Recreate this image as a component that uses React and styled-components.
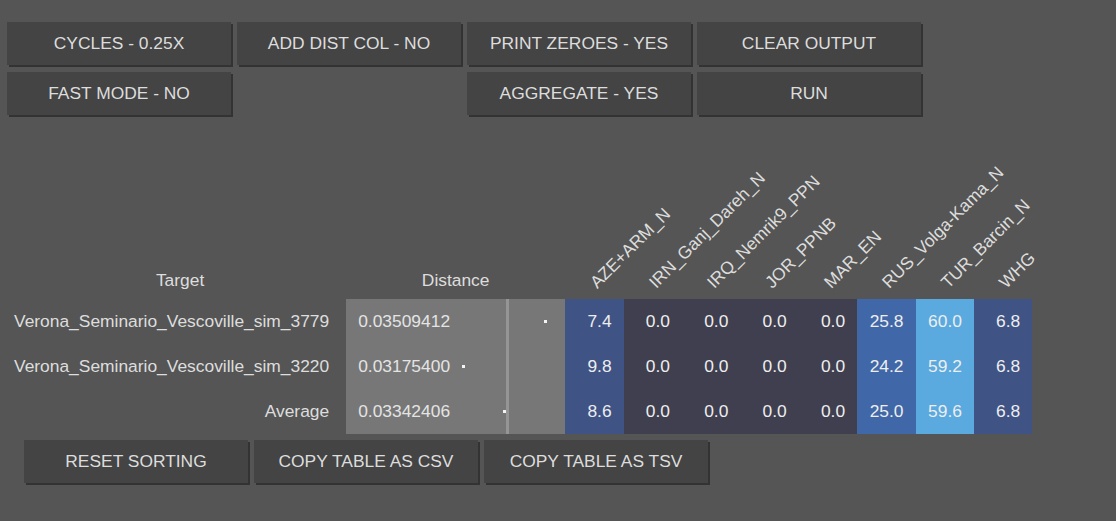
import styled, { createGlobalStyle } from "styled-components";

const GlobalStyle = createGlobalStyle`
  body {
    margin: 0;
    background: #555555;
    color: #dddddd;
    font-family: "Liberation Sans", Arial, sans-serif;
  }
`;

const populations = [
  "AZE+ARM_N",
  "IRN_Ganj_Dareh_N",
  "IRQ_Nemrik9_PPN",
  "JOR_PPNB",
  "MAR_EN",
  "RUS_Volga-Kama_N",
  "TUR_Barcin_N",
  "WHG",
];

const rows = [
  { name: "Verona_Seminario_Vescoville_sim_3779", dist: 0.03509412, values: [7.4, 0, 0, 0, 0, 25.8, 60.0, 6.8] },
  { name: "Verona_Seminario_Vescoville_sim_3220", dist: 0.031754, values: [9.8, 0, 0, 0, 0, 24.2, 59.2, 6.8] },
  { name: "Average", dist: 0.03342406, values: [8.6, 0, 0, 0, 0, 25.0, 59.6, 6.8] },
];

// place of the dot in the distance column
const dotLeft = (d) => 116 + (d - 0.031754) * 24551;

const heat = (v) => {
  if (v === 0) return "#3f3f4f";
  if (v < 15) return "#3f5385";
  if (v < 40) return "#4067a7";
  return "#5aa9df";
};

const Page = styled.div`
  padding: 22px 0 0 7px;
  min-height: 521px;
  box-sizing: border-box;
`;

const Controls = styled.div`
  display: grid;
  grid-template-columns: repeat(4, 224px);
  grid-auto-rows: 43px;
  column-gap: 6px;
  row-gap: 7px;
`;

const Button = styled.button`
  grid-column: ${(p) => p.$col || "auto"};
  width: 224px;
  height: 43px;
  padding: 0;
  background: #444444;
  color: #dddddd;
  border: none;
  box-shadow: 2px 2px 0 #333333;
  font-family: "Liberation Sans", Arial, sans-serif;
  font-size: 17.4px;
  cursor: pointer;
`;

const Table = styled.table`
  margin: 43px 0 0 7px;
  border-collapse: collapse;
  border-spacing: 0;
  table-layout: fixed;
  font-size: 17.4px;
`;

const Head = styled.th`
  height: 132px;
  padding: 0 0 9px;
  width: ${(p) => p.$w}px;
  font-weight: normal;
  text-align: center;
  vertical-align: bottom;
  line-height: 20px;
`;

const PopHead = styled.th`
  width: 58.4px;
  padding: 0;
  vertical-align: bottom;
  font-weight: normal;
`;

const Slanted = styled.div`
  width: 0;
  height: 20px;
  line-height: 20px;
  white-space: nowrap;
  text-align: left;
  transform-origin: 0 100%;
  transform: translate(35px, -7px) rotate(-45deg);
`;

const Row = styled.tr`
  height: 45px;
`;

const Name = styled.td`
  padding: 0 17px 0 0;
  text-align: right;
  white-space: nowrap;
`;

const DistCell = styled.td`
  position: relative;
  background: #777777;
  padding: 0 0 0 12px;
  color: #e4e4e4;
`;

const MeanLine = styled.span`
  position: absolute;
  top: 0;
  bottom: 0;
  left: 160px;
  width: 3px;
  background: #959595;
`;

const Dot = styled.span`
  position: absolute;
  top: 50%;
  width: 3px;
  height: 3px;
  margin-top: -2px;
  background: #f4f4f4;
`;

const Value = styled.td`
  background: ${(p) => p.$bg};
  padding: 0 12px 0 0;
  text-align: right;
  color: #eeeeee;
`;

const Footer = styled.div`
  display: flex;
  gap: 6px;
  margin: 6px 0 0 17px;
`;

export default function App() {
  return (
    <Page>
      <GlobalStyle />
      <Controls>
        <Button>CYCLES - 0.25X</Button>
        <Button>ADD DIST COL - NO</Button>
        <Button>PRINT ZEROES - YES</Button>
        <Button>CLEAR OUTPUT</Button>
        <Button>FAST MODE - NO</Button>
        <Button $col="3">AGGREGATE - YES</Button>
        <Button>RUN</Button>
      </Controls>

      <Table>
        <thead>
          <tr>
            <Head $w={330}>Target</Head>
            <Head $w={219}>Distance</Head>
            {populations.map((p) => (
              <PopHead key={p}>
                <Slanted>{p}</Slanted>
              </PopHead>
            ))}
          </tr>
        </thead>
        <tbody>
          {rows.map((r) => (
            <Row key={r.name}>
              <Name>{r.name}</Name>
              <DistCell>
                {r.dist.toFixed(8)}
                <MeanLine />
                <Dot style={{ left: dotLeft(r.dist) }} />
              </DistCell>
              {r.values.map((v, i) => (
                <Value key={i} $bg={heat(v)}>
                  {v.toFixed(1)}
                </Value>
              ))}
            </Row>
          ))}
        </tbody>
      </Table>

      <Footer>
        <Button>RESET SORTING</Button>
        <Button>COPY TABLE AS CSV</Button>
        <Button>COPY TABLE AS TSV</Button>
      </Footer>
    </Page>
  );
}
